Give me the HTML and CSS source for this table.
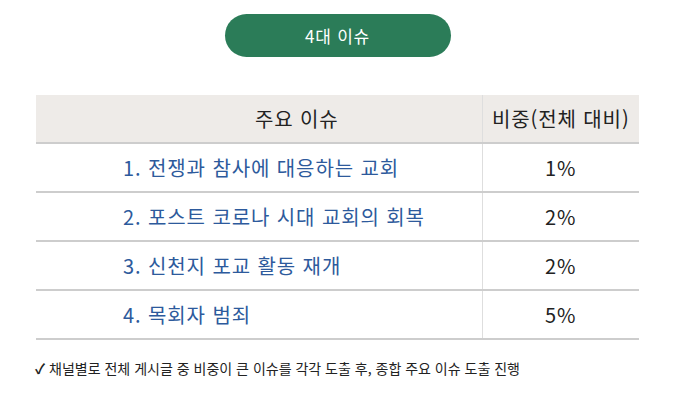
FILE: index.html
```html
<!DOCTYPE html>
<html lang="ko">
<head>
<meta charset="utf-8">
<link rel="stylesheet" href="styles.css">
</head>
<body>
<div class="wrap">
  <div class="pill">4대 이슈</div>
  <table class="issues">
    <thead>
      <tr><th class="c-issue">주요 이슈</th><th class="c-share">비중(전체 대비)</th></tr>
    </thead>
    <tbody>
      <tr><td class="c-issue">1. 전쟁과 참사에 대응하는 교회</td><td class="c-share">1%</td></tr>
      <tr><td class="c-issue">2. 포스트 코로나 시대 교회의 회복</td><td class="c-share">2%</td></tr>
      <tr><td class="c-issue">3. 신천지 포교 활동 재개</td><td class="c-share">2%</td></tr>
      <tr><td class="c-issue">4. 목회자 범죄</td><td class="c-share">5%</td></tr>
    </tbody>
  </table>
  <p class="note"><span class="check">✓</span> 채널별로 전체 게시글 중 비중이 큰 이슈를 각각 도출 후, 종합 주요 이슈 도출 진행</p>
</div>
</body>
</html>
```

FILE: styles.css
```css
html, body {
  margin: 0;
  padding: 0;
  background: #ffffff;
}
body {
  font-family: "Noto Sans CJK KR", "Noto Sans", sans-serif;
  color: #222222;
}
.wrap {
  width: 603px;
  margin-left: 36px;
  padding-top: 14px;
}
.pill {
  width: 226px;
  height: 43px;
  margin: 0 auto;
  border-radius: 22px;
  background: #2b7c58;
  color: #ffffff;
  font-size: 17px;
  letter-spacing: 0.8px;
  display: flex;
  align-items: center;
  justify-content: center;
}
.issues {
  margin-top: 38px;
  width: 603px;
  border-collapse: collapse;
  table-layout: fixed;
}
.issues th, .issues td {
  padding: 0;
  font-weight: normal;
  border-bottom: 2px solid #cdcdcd;
  font-size: 20px;
  letter-spacing: 0.9px;
}
.issues thead th {
  background: #eeebe8;
  height: 47px;
  color: #222222;
  text-align: center;
}
.issues th.c-issue {
  width: 446px;
  padding-left: 76px;
  box-sizing: border-box;
}
.issues .c-share {
  border-left: 1px solid #dedede;
}
.issues td {
  height: 47px;
}
.issues td.c-issue {
  padding-left: 87px;
  color: #2d5a9c;
  text-align: left;
}
.issues td.c-share {
  text-align: center;
  color: #222222;
}
.note {
  margin: 18px 0 0 -1px;
  font-size: 14px;
  color: #222222;
}
.check {
  font-weight: bold;
}
```
